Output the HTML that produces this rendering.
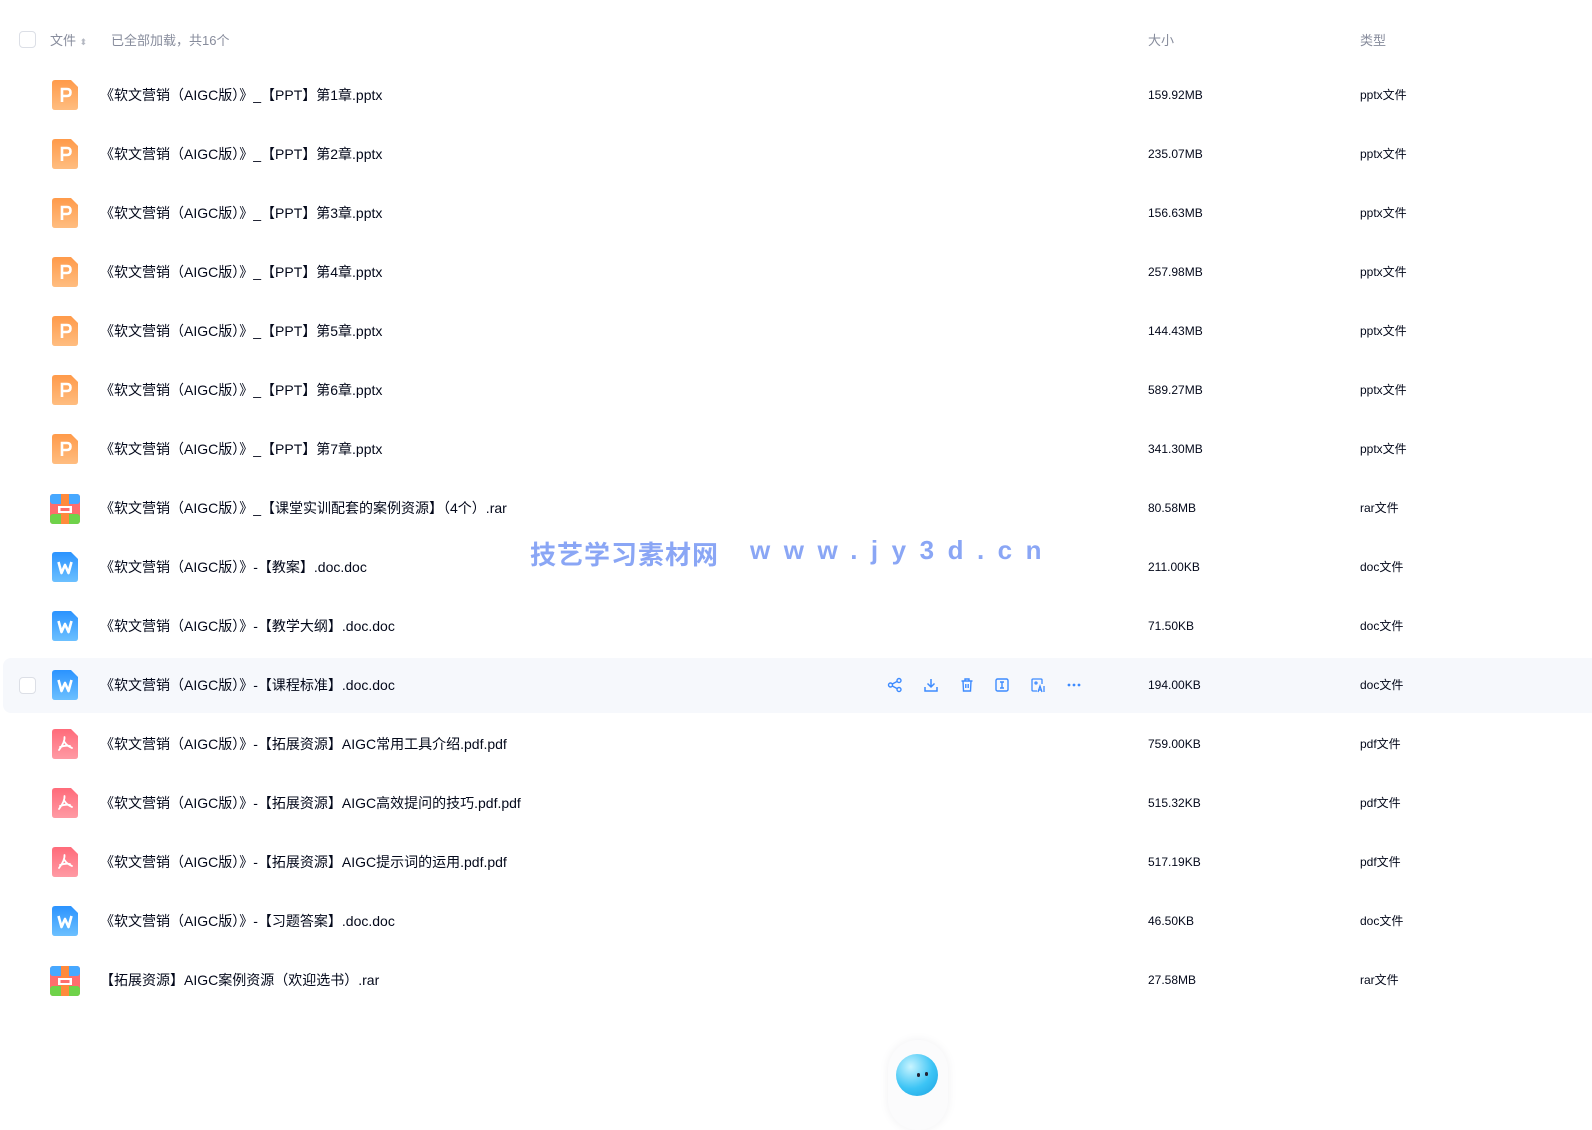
<!DOCTYPE html>
<html><head><meta charset="utf-8"><style>
body{margin:0;width:1592px;height:1120px;background:#fff;font-family:"Liberation Sans","Noto Sans CJK SC",sans-serif;position:relative;overflow:hidden}
.hdr{position:absolute;top:30px;font-size:13px;color:#878c9c}
.cb{position:absolute;left:19px;width:15px;height:15px;border:1px solid #dcdfe6;border-radius:4px;background:#fff}
.row{position:absolute;left:3px;right:0;height:55px}
.row.hl{background:#f6f8fc;border-radius:8px 0 0 8px}
.ic{position:absolute;left:49px;top:12px;width:26px;height:30px}
.nm{position:absolute;left:97px;top:0;line-height:55px;font-size:14px;color:#03081a}
.sz{position:absolute;left:1145px;line-height:55px;font-size:12px;color:#03081a}
.tp{position:absolute;left:1357px;line-height:55px;font-size:12px;color:#03081a}
.wm{position:absolute;top:535px;font-size:26px;font-weight:bold;color:#8aa6f5;white-space:pre}
.acts{position:absolute;left:884px;top:19px}
.acts svg{position:absolute;top:0}
</style></head><body>
<div class="cb" style="top:31px"></div>
<div class="hdr" style="left:50px">文件 <span style="font-size:9px;color:#b4b8c2">⬍</span></div>
<div class="hdr" style="left:111px">已全部加载，共16个</div>
<div class="hdr" style="left:1148px">大小</div>
<div class="hdr" style="left:1360px">类型</div>

<svg width="0" height="0" style="position:absolute"><defs>
<linearGradient id="gp" x1="0" y1="0" x2="0" y2="1"><stop offset="0" stop-color="#ff9a4a"/><stop offset="1" stop-color="#ffbd80"/></linearGradient>
<linearGradient id="gw" x1="0" y1="0" x2="0" y2="1"><stop offset="0" stop-color="#2b93ff"/><stop offset="1" stop-color="#6cc0ff"/></linearGradient>
<linearGradient id="gf" x1="0" y1="0" x2="0" y2="1"><stop offset="0" stop-color="#ff6b7a"/><stop offset="1" stop-color="#ff9aa4"/></linearGradient>
<symbol id="p" viewBox="0 0 26 30"><path d="M3 0H19L26 7V27Q26 30 23 30H3Q0 30 0 27V3Q0 0 3 0Z" fill="url(#gp)"/><path d="M10 22V9H15Q18.5 9 18.5 12.5Q18.5 16 15 16H10" fill="none" stroke="#fff" stroke-width="2.6"/></symbol>
<symbol id="w" viewBox="0 0 26 30"><path d="M3 0H19L26 7V27Q26 30 23 30H3Q0 30 0 27V3Q0 0 3 0Z" fill="url(#gw)"/><path d="M6.5 10L9.5 21L13 13L16.5 21L19.5 10" fill="none" stroke="#fff" stroke-width="2.6" stroke-linejoin="round"/></symbol>
<symbol id="f" viewBox="0 0 26 30"><path d="M3 0H19L26 7V27Q26 30 23 30H3Q0 30 0 27V3Q0 0 3 0Z" fill="url(#gf)"/><path d="M12.5 8Q13 13 7 21M12.5 13Q15 17 20 19M8 18Q13 16 18 17" fill="none" stroke="#fff" stroke-width="1.8" stroke-linecap="round"/></symbol>
<symbol id="r" viewBox="0 0 30 30"><rect width="30" height="30" rx="3" fill="#ff6d6d"/><rect width="30" height="10" rx="3" fill="#46a8ff"/><rect y="20" width="30" height="10" rx="3" fill="#6fd24a"/><rect x="11" width="8" height="30" fill="#ff8a3c"/><rect x="8" y="12" width="14" height="7" fill="#fff"/><rect x="10.5" y="14" width="9" height="3" fill="#ff6d6d"/></symbol>
</defs></svg>

<div class="row" style="top:68px"><svg class="ic"><use href="#p"/></svg><div class="nm">《软文营销（AIGC版）》_【PPT】第1章.pptx</div><div class="sz">159.92MB</div><div class="tp">pptx文件</div></div>
<div class="row" style="top:127px"><svg class="ic"><use href="#p"/></svg><div class="nm">《软文营销（AIGC版）》_【PPT】第2章.pptx</div><div class="sz">235.07MB</div><div class="tp">pptx文件</div></div>
<div class="row" style="top:186px"><svg class="ic"><use href="#p"/></svg><div class="nm">《软文营销（AIGC版）》_【PPT】第3章.pptx</div><div class="sz">156.63MB</div><div class="tp">pptx文件</div></div>
<div class="row" style="top:245px"><svg class="ic"><use href="#p"/></svg><div class="nm">《软文营销（AIGC版）》_【PPT】第4章.pptx</div><div class="sz">257.98MB</div><div class="tp">pptx文件</div></div>
<div class="row" style="top:304px"><svg class="ic"><use href="#p"/></svg><div class="nm">《软文营销（AIGC版）》_【PPT】第5章.pptx</div><div class="sz">144.43MB</div><div class="tp">pptx文件</div></div>
<div class="row" style="top:363px"><svg class="ic"><use href="#p"/></svg><div class="nm">《软文营销（AIGC版）》_【PPT】第6章.pptx</div><div class="sz">589.27MB</div><div class="tp">pptx文件</div></div>
<div class="row" style="top:422px"><svg class="ic"><use href="#p"/></svg><div class="nm">《软文营销（AIGC版）》_【PPT】第7章.pptx</div><div class="sz">341.30MB</div><div class="tp">pptx文件</div></div>
<div class="row" style="top:481px"><svg class="ic" style="left:47px;top:13px;width:30px;height:30px"><use href="#r"/></svg><div class="nm">《软文营销（AIGC版）》_【课堂实训配套的案例资源】（4个）.rar</div><div class="sz">80.58MB</div><div class="tp">rar文件</div></div>
<div class="row" style="top:540px"><svg class="ic"><use href="#w"/></svg><div class="nm">《软文营销（AIGC版）》-【教案】.doc.doc</div><div class="sz">211.00KB</div><div class="tp">doc文件</div></div>
<div class="row" style="top:599px"><svg class="ic"><use href="#w"/></svg><div class="nm">《软文营销（AIGC版）》-【教学大纲】.doc.doc</div><div class="sz">71.50KB</div><div class="tp">doc文件</div></div>
<div class="row hl" style="top:658px"><div class="cb" style="left:16px;top:19px"></div><svg class="ic"><use href="#w"/></svg><div class="nm">《软文营销（AIGC版）》-【课程标准】.doc.doc</div>
<div class="acts">
<svg style="left:0" width="16" height="16" viewBox="0 0 16 16" fill="none" stroke="#3d8bff" stroke-width="1.4"><circle cx="3.5" cy="8" r="2"/><circle cx="12" cy="3.5" r="2"/><circle cx="12" cy="12.5" r="2"/><path d="M5.3 7L10.2 4.4M5.3 9L10.2 11.6"/></svg>
<svg style="left:36px" width="16" height="16" viewBox="0 0 16 16" fill="none" stroke="#3d8bff" stroke-width="1.5"><path d="M8 2V10M4.5 6.5L8 10L11.5 6.5M2 10V14H14V10"/></svg>
<svg style="left:72px" width="16" height="16" viewBox="0 0 16 16" fill="none" stroke="#3d8bff" stroke-width="1.4"><path d="M2.5 4H13.5M6 4V2H10V4M4 4L4.5 14H11.5L12 4M6.8 7V11M9.2 7V11"/></svg>
<svg style="left:107px" width="16" height="16" viewBox="0 0 16 16" fill="none" stroke="#3d8bff" stroke-width="1.4"><rect x="2" y="2" width="12" height="12" rx="1.5"/><path d="M6 5H10M6 11H10M8 5V11"/></svg>
<svg style="left:143px" width="16" height="16" viewBox="0 0 16 16" fill="none" stroke="#3d8bff" stroke-width="1.3"><path d="M7 14H3Q2 14 2 13V3Q2 2 3 2H11Q12 2 12 3V7"/><circle cx="6" cy="6" r="1"/><path d="M8 15L10 9L12 15M8.8 13H11.2M14 9V15"/></svg>
<svg style="left:179px" width="16" height="16" viewBox="0 0 16 16" fill="#3d8bff"><circle cx="3" cy="8" r="1.4"/><circle cx="8" cy="8" r="1.4"/><circle cx="13" cy="8" r="1.4"/></svg>
</div>
<div class="sz">194.00KB</div><div class="tp">doc文件</div></div>
<div class="row" style="top:717px"><svg class="ic"><use href="#f"/></svg><div class="nm">《软文营销（AIGC版）》-【拓展资源】AIGC常用工具介绍.pdf.pdf</div><div class="sz">759.00KB</div><div class="tp">pdf文件</div></div>
<div class="row" style="top:776px"><svg class="ic"><use href="#f"/></svg><div class="nm">《软文营销（AIGC版）》-【拓展资源】AIGC高效提问的技巧.pdf.pdf</div><div class="sz">515.32KB</div><div class="tp">pdf文件</div></div>
<div class="row" style="top:835px"><svg class="ic"><use href="#f"/></svg><div class="nm">《软文营销（AIGC版）》-【拓展资源】AIGC提示词的运用.pdf.pdf</div><div class="sz">517.19KB</div><div class="tp">pdf文件</div></div>
<div class="row" style="top:894px"><svg class="ic"><use href="#w"/></svg><div class="nm">《软文营销（AIGC版）》-【习题答案】.doc.doc</div><div class="sz">46.50KB</div><div class="tp">doc文件</div></div>
<div class="row" style="top:953px"><svg class="ic" style="left:47px;top:13px;width:30px;height:30px"><use href="#r"/></svg><div class="nm">【拓展资源】AIGC案例资源（欢迎选书）.rar</div><div class="sz">27.58MB</div><div class="tp">rar文件</div></div>

<div class="wm" style="left:530px;letter-spacing:1px">技艺学习素材网</div>
<div class="wm" style="left:750px;letter-spacing:13.5px">www.jy3d.cn</div>

<div style="position:absolute;left:888px;top:1040px;width:60px;height:90px;border-radius:30px;background:#fbfbfc;box-shadow:0 0 10px #f0f0f2"></div>
<div style="position:absolute;left:896px;top:1054px;width:42px;height:42px;border-radius:50%;background:radial-gradient(circle at 35% 30%,#c8f4ff,#3cc4f5 55%,#1aa0e0)"></div>
<div style="position:absolute;left:917px;top:1073px;width:3px;height:4px;background:#223;border-radius:2px"></div>
<div style="position:absolute;left:925px;top:1072px;width:3px;height:4px;background:#223;border-radius:2px"></div>
</body></html>
